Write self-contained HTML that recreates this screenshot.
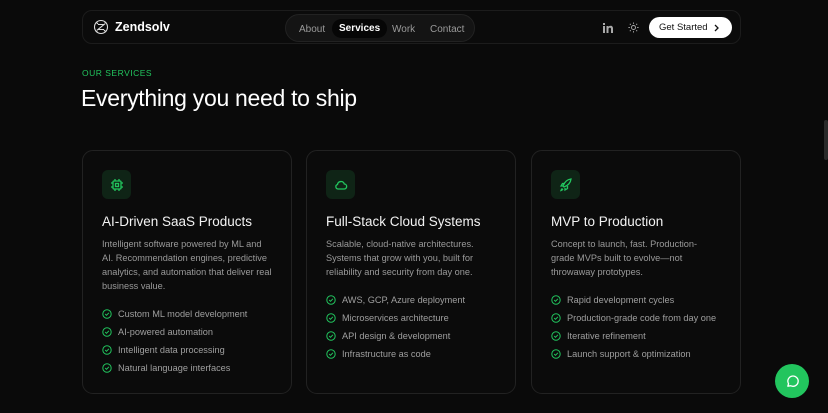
<!DOCTYPE html>
<html><head><meta charset="utf-8"><style>
*{margin:0;padding:0;box-sizing:border-box}
body{width:828px;height:413px;overflow:hidden;background:#0a0a0a;font-family:"Liberation Sans",sans-serif;color:#fff;position:relative}
.nav{position:absolute;left:82px;top:10px;width:659px;height:34px;border:1px solid #1c1c1c;border-radius:10px;background:#0b0b0b}
.logo{position:absolute;left:10px;top:8px;display:flex;align-items:center;gap:6px;font-weight:bold;font-size:12.5px}
.pill{position:absolute;left:202px;top:3px;width:190px;height:28px;border:1px solid #222;border-radius:14px;background:#141414;font-size:10px;color:#9a9a9a}
.pill span{position:absolute;top:6px;padding:3px 0}
.pill .act{background:#060606;color:#fff;font-weight:bold;padding:4px 7px;top:4px;border-radius:10px}
.gs{position:absolute;left:566px;top:6px;width:83px;height:21px;background:#fff;color:#111;border-radius:11px;font-size:9.5px;display:flex;align-items:center;padding-left:10px}
.eyebrow{position:absolute;left:82px;top:68px;font-size:8.5px;color:#22c55e;letter-spacing:.5px}
h1{position:absolute;left:81px;top:85px;font-size:23px;font-weight:normal;letter-spacing:-.3px}
.card{position:absolute;top:150px;width:210px;height:244px;border:1px solid #222;border-radius:11px;background:#0b0b0b;padding:19px 19px}
.ic{width:29px;height:29px;border-radius:6px;background:#0f2416;display:flex;align-items:center;justify-content:center}
.card h3{font-size:13.5px;font-weight:normal;margin-top:15px;color:#f3f3f3}
.card p{font-size:9.2px;line-height:14px;color:#9a9a9a;margin-top:8px;width:172px}
.card ul{list-style:none;margin-top:12px}
.card li{font-size:9.2px;color:#9f9f9f;height:18px;display:flex;align-items:center;gap:6px}
.chat{position:absolute;left:775px;top:364px;width:34px;height:34px;border-radius:50%;background:#22c55e;display:flex;align-items:center;justify-content:center}
.sb{position:absolute;left:824px;top:120px;width:4px;height:40px;background:#2a2a2a;border-radius:2px}
</style></head><body>
<div class="nav">
 <div class="logo"><svg width="16" height="16" viewBox="0 0 16 16" fill="none" stroke="#ddd" stroke-width="1.1"><circle cx="8" cy="8" r="6.5"/><path d="M5 5.5h6l-6 5h6M3 3l2 2M13 13l-2-2M13 3l-1.5 1.5M3 13l1.5-1.5"/></svg>Zendsolv</div>
 <div class="pill"><span style="left:13px">About</span><span class="act" style="left:46px">Services</span><span style="left:106px">Work</span><span style="left:144px">Contact</span></div>
 <svg style="position:absolute;left:520px;top:12px" width="10" height="10" viewBox="0 0 10 10" fill="#aaa"><rect x="0" y="0" width="2" height="2"/><rect x="0" y="3" width="2" height="7"/><path d="M3.5 3h2v1c.5-.8 1.3-1.2 2.2-1.2C9 2.8 10 3.8 10 5.5V10H8V6c0-.9-.4-1.4-1.1-1.4S5.5 5.1 5.5 6v4h-2z"/></svg>
 <svg style="position:absolute;left:545px;top:11px" width="11" height="11" viewBox="0 0 12 12" fill="none" stroke="#aaa" stroke-width="1"><circle cx="6" cy="6" r="2.2"/><path d="M6 .5v1.5M6 10v1.5M.5 6H2M10 6h1.5M2 2l1 1M9 9l1 1M2 10l1-1M9 3l1-1"/></svg>
 <div class="gs">Get Started<svg style="position:absolute;left:64px;top:7px" width="7" height="8" viewBox="0 0 7 8" fill="none" stroke="#111" stroke-width="1.3"><path d="M2 1l3 3-3 3"/></svg></div>
</div>
<div class="eyebrow">OUR SERVICES</div>
<h1>Everything you need to ship</h1>

<div class="card" style="left:82px">
 <div class="ic"><svg width="14" height="14" viewBox="0 0 14 14" fill="none" stroke="#22c55e" stroke-width="1.3"><rect x="3" y="3" width="8" height="8" rx="1"/><rect x="5.5" y="5.5" width="3" height="3"/><path d="M5 1v2M9 1v2M5 11v2M9 11v2M1 5h2M1 9h2M11 5h2M11 9h2"/></svg></div>
 <h3>AI-Driven SaaS Products</h3>
 <p>Intelligent software powered by ML and AI. Recommendation engines, predictive analytics, and automation that deliver real business value.</p>
 <ul><li><svg width="10" height="10" viewBox="0 0 10 10" fill="none" stroke="#22c55e" stroke-width="1"><circle cx="5" cy="5" r="4.2"/><path d="M3.2 5l1.3 1.3 2.4-2.5"/></svg>Custom ML model development</li><li><svg width="10" height="10" viewBox="0 0 10 10" fill="none" stroke="#22c55e" stroke-width="1"><circle cx="5" cy="5" r="4.2"/><path d="M3.2 5l1.3 1.3 2.4-2.5"/></svg>AI-powered automation</li><li><svg width="10" height="10" viewBox="0 0 10 10" fill="none" stroke="#22c55e" stroke-width="1"><circle cx="5" cy="5" r="4.2"/><path d="M3.2 5l1.3 1.3 2.4-2.5"/></svg>Intelligent data processing</li><li><svg width="10" height="10" viewBox="0 0 10 10" fill="none" stroke="#22c55e" stroke-width="1"><circle cx="5" cy="5" r="4.2"/><path d="M3.2 5l1.3 1.3 2.4-2.5"/></svg>Natural language interfaces</li></ul>
</div>

<div class="card" style="left:306px">
 <div class="ic"><svg width="14" height="14" viewBox="0 0 14 14" fill="none" stroke="#22c55e" stroke-width="1.3"><path d="M4 11h6a2.5 2.5 0 0 0 .3-5A3.5 3.5 0 0 0 3.5 6.5 2.3 2.3 0 0 0 4 11z"/></svg></div>
 <h3>Full-Stack Cloud Systems</h3>
 <p>Scalable, cloud-native architectures. Systems that grow with you, built for reliability and security from day one.</p>
 <ul><li><svg width="10" height="10" viewBox="0 0 10 10" fill="none" stroke="#22c55e" stroke-width="1"><circle cx="5" cy="5" r="4.2"/><path d="M3.2 5l1.3 1.3 2.4-2.5"/></svg>AWS, GCP, Azure deployment</li><li><svg width="10" height="10" viewBox="0 0 10 10" fill="none" stroke="#22c55e" stroke-width="1"><circle cx="5" cy="5" r="4.2"/><path d="M3.2 5l1.3 1.3 2.4-2.5"/></svg>Microservices architecture</li><li><svg width="10" height="10" viewBox="0 0 10 10" fill="none" stroke="#22c55e" stroke-width="1"><circle cx="5" cy="5" r="4.2"/><path d="M3.2 5l1.3 1.3 2.4-2.5"/></svg>API design &amp; development</li><li><svg width="10" height="10" viewBox="0 0 10 10" fill="none" stroke="#22c55e" stroke-width="1"><circle cx="5" cy="5" r="4.2"/><path d="M3.2 5l1.3 1.3 2.4-2.5"/></svg>Infrastructure as code</li></ul>
</div>

<div class="card" style="left:531px">
 <div class="ic"><svg width="14" height="14" viewBox="0 0 14 14" fill="none" stroke="#22c55e" stroke-width="1.3"><path d="M5 9l-1-1c1.5-4 4-6.5 8-7-.5 4-3 6.5-7 8zM4 8H2l1.5-2.5H6M6 10v2l2.5-1.5V8M3.5 10.5c-1 .5-1.5 2-1.5 2s1.5-.5 2-1.5"/></svg></div>
 <h3>MVP to Production</h3>
 <p style="width:166px">Concept to launch, fast. Production-grade MVPs built to evolve—not throwaway prototypes.</p>
 <ul><li><svg width="10" height="10" viewBox="0 0 10 10" fill="none" stroke="#22c55e" stroke-width="1"><circle cx="5" cy="5" r="4.2"/><path d="M3.2 5l1.3 1.3 2.4-2.5"/></svg>Rapid development cycles</li><li><svg width="10" height="10" viewBox="0 0 10 10" fill="none" stroke="#22c55e" stroke-width="1"><circle cx="5" cy="5" r="4.2"/><path d="M3.2 5l1.3 1.3 2.4-2.5"/></svg>Production-grade code from day one</li><li><svg width="10" height="10" viewBox="0 0 10 10" fill="none" stroke="#22c55e" stroke-width="1"><circle cx="5" cy="5" r="4.2"/><path d="M3.2 5l1.3 1.3 2.4-2.5"/></svg>Iterative refinement</li><li><svg width="10" height="10" viewBox="0 0 10 10" fill="none" stroke="#22c55e" stroke-width="1"><circle cx="5" cy="5" r="4.2"/><path d="M3.2 5l1.3 1.3 2.4-2.5"/></svg>Launch support &amp; optimization</li></ul>
</div>

<div class="chat"><svg width="15" height="15" viewBox="0 0 16 16" fill="none" stroke="#fff" stroke-width="1.4"><path d="M3 13l.8-2.6A5.5 5.5 0 1 1 6 12.5z" stroke-linejoin="round"/></svg></div>
<div class="sb"></div>
</body></html>
